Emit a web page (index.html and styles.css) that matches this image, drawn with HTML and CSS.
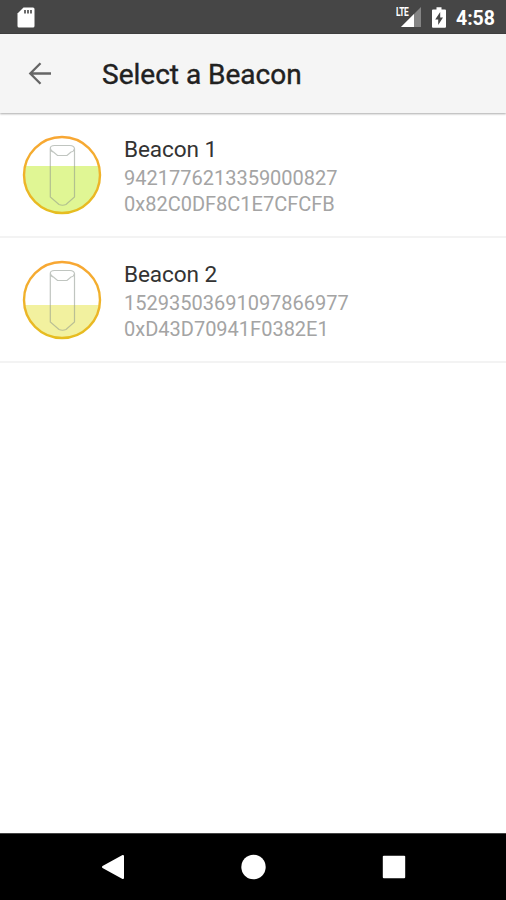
FILE: index.html
```html
<!DOCTYPE html>
<html>
<head>
	<meta charset="utf-8">
	<title>Select a Beacon</title>
	<link rel="stylesheet" href="styles.css">
</head>
<body>
	<div class="status">
		<svg class="sd" width="18" height="22" viewBox="0 0 18 22">
			<path d="M6.500 0.500H16q1.500 0 1.500 1.500V19q0 1.500-1.500 1.500H2q-1.500 0-1.500-1.500V6.500z" fill="#fff"/>
			<path d="M8 3v3.500M11 3v3.500M14 3v3.500" stroke="#464646" stroke-width="1.600"/>
		</svg>
		<div class="signal">
			<span class="lte">LTE</span>
			<svg width="20" height="20" viewBox="0 0 20 20">
				<path d="M20 0V20H0z" fill="#858585"/>
				<path d="M13 7V20H0z" fill="#fff"/>
			</svg>
		</div>
		<svg class="battery" width="14" height="22" viewBox="0 0 14 22">
			<path d="M4.500 0.200h5V2.500H13q1 0 1 1V19.700q0 1-1 1H1q-1 0-1-1V3.500q0-1 1-1H4.500z" fill="#fff"/>
			<path d="M8.200 5L3.200 12.500H6.200V18L11 10.500H8.200z" fill="#464646"/>
		</svg>
		<span class="time">4:58</span>
	</div>

	<div class="toolbar">
		<svg class="back" width="24" height="24" viewBox="0 0 24 24">
			<path d="M23 11.500H2.500M12.500 1.300L2.300 11.500L12.500 21.700" fill="none" stroke="#656565" stroke-width="2.300"/>
		</svg>
		<h1>Select a Beacon</h1>
	</div>

	<div class="list">
		<div class="item">
			<svg class="beacon" width="80" height="80" viewBox="0 0 80 80">
				<defs>
					<linearGradient id="ring" x1="0" y1="0" x2="0" y2="1">
						<stop offset="0" stop-color="#f8a734"/>
						<stop offset="1" stop-color="#e6bd20"/>
					</linearGradient>
					<clipPath id="disc"><circle cx="40" cy="40" r="38"/></clipPath>
				</defs>
				<rect y="31" width="80" height="49" fill="#e0f694" clip-path="url(#disc)"/>
				<path class="tube" d="M28.300 13.500V62L37 69.500Q40.500 71 44 69.500L52.500 62V13.500Q52 10.500 48 10.500H32.500Q28.300 10.500 28.300 13.500Q29 16.500 31.500 17L35.500 20.500H45L49 17Q52 16.500 52.500 13.500"/>
				<circle cx="40" cy="40" r="38" fill="none" stroke="url(#ring)" stroke-width="2.400"/>
			</svg>
			<div class="info">
				<h2>Beacon 1</h2>
				<p>9421776213359000827</p>
				<p>0x82C0DF8C1E7CFCFB</p>
			</div>
		</div>
		<div class="item">
			<svg class="beacon" width="80" height="80" viewBox="0 0 80 80">
				<rect y="45" width="80" height="35" fill="#f2f19f" clip-path="url(#disc)"/>
				<path class="tube" d="M28.300 13.500V62L37 69.500Q40.500 71 44 69.500L52.500 62V13.500Q52 10.500 48 10.500H32.500Q28.300 10.500 28.300 13.500Q29 16.500 31.500 17L35.500 20.500H45L49 17Q52 16.500 52.500 13.500"/>
				<circle cx="40" cy="40" r="38" fill="none" stroke="url(#ring)" stroke-width="2.400"/>
			</svg>
			<div class="info">
				<h2>Beacon 2</h2>
				<p>15293503691097866977</p>
				<p>0xD43D70941F0382E1</p>
			</div>
		</div>
	</div>

	<div class="nav">
		<svg width="24" height="26" viewBox="0 0 24 26"><path d="M22 2V24L2 13z" fill="#fff" stroke="#fff" stroke-width="2" stroke-linejoin="round"/></svg>
		<svg width="26" height="26" viewBox="0 0 26 26"><circle cx="12.500" cy="13" r="12.200" fill="#fff"/></svg>
		<svg width="24" height="24" viewBox="0 0 24 24"><rect x="0.800" y="0.800" width="22.400" height="22.400" rx="1" fill="#fff"/></svg>
	</div>
</body>
</html>
```
FILE: styles.css
```css
* {
	box-sizing: border-box;
}

body{
	display: flex;
	flex-direction: column;
	height: 900px;
	margin: 0;
	background: #fff;
	font-family: Roboto, sans-serif;
	overflow: hidden;
}

h1, h2, p{
	margin: 0;
}

svg{
	display: block;
	flex: none;
}

.status{
	display: flex;
	height: 34px;
	padding: 7px 11px 0 17px;
	background: #464646;
	border-bottom: 1px solid #363636;
	color: #fff;
}

.signal{
	display: flex;
	position: relative;
	margin-left: auto;
	padding-right: 11px;
}

.lte{
	position: absolute;
	left: -5px;
	top: 0;
	font-size: 12px;
	font-weight: 700;
	line-height: 11px;
	letter-spacing: -.5px;
	transform: scaleX(.7);
	transform-origin: 0 0;
	background: #464646;
}

.time{
	margin-left: 10px;
	font-size: 19.5px;
	font-weight: 700;
	line-height: 23px;
}

.toolbar{
	display: flex;
	align-items: center;
	height: 79px;
	padding-left: 28px;
	background: #f5f5f5;
	box-shadow: 0 1px 2px #aaa;
}

h1{
	margin-left: 50px;
	padding-top: 2px;
	font-size: 28px;
	font-weight: 400;
	color: #212121;
	-webkit-text-stroke: .4px #212121;
}

.item{
	display: flex;
	height: 125px;
	padding: 22px 22px 0;
	border-bottom: 2px solid #f3f3f3;
}

.tube{
	fill: none;
	stroke: #8c968c;
	stroke-opacity: .55;
	stroke-width: 1.2;
}

.info{
	margin-left: 22px;
	padding-top: 1px;
}

h2{
	font-size: 22.6px;
	font-weight: 400;
	line-height: 28.5px;
	letter-spacing: -.1px;
	color: #333;
}

.info p{
	font-size: 20px;
	line-height: 26.5px;
	color: #a4a4a4;
}

.nav{
	display: flex;
	align-items: center;
	justify-content: space-between;
	height: 67px;
	margin-top: auto;
	padding: 0 100px 0 101px;
	border-top: 1px solid #444;
	background: #000;
}
```
